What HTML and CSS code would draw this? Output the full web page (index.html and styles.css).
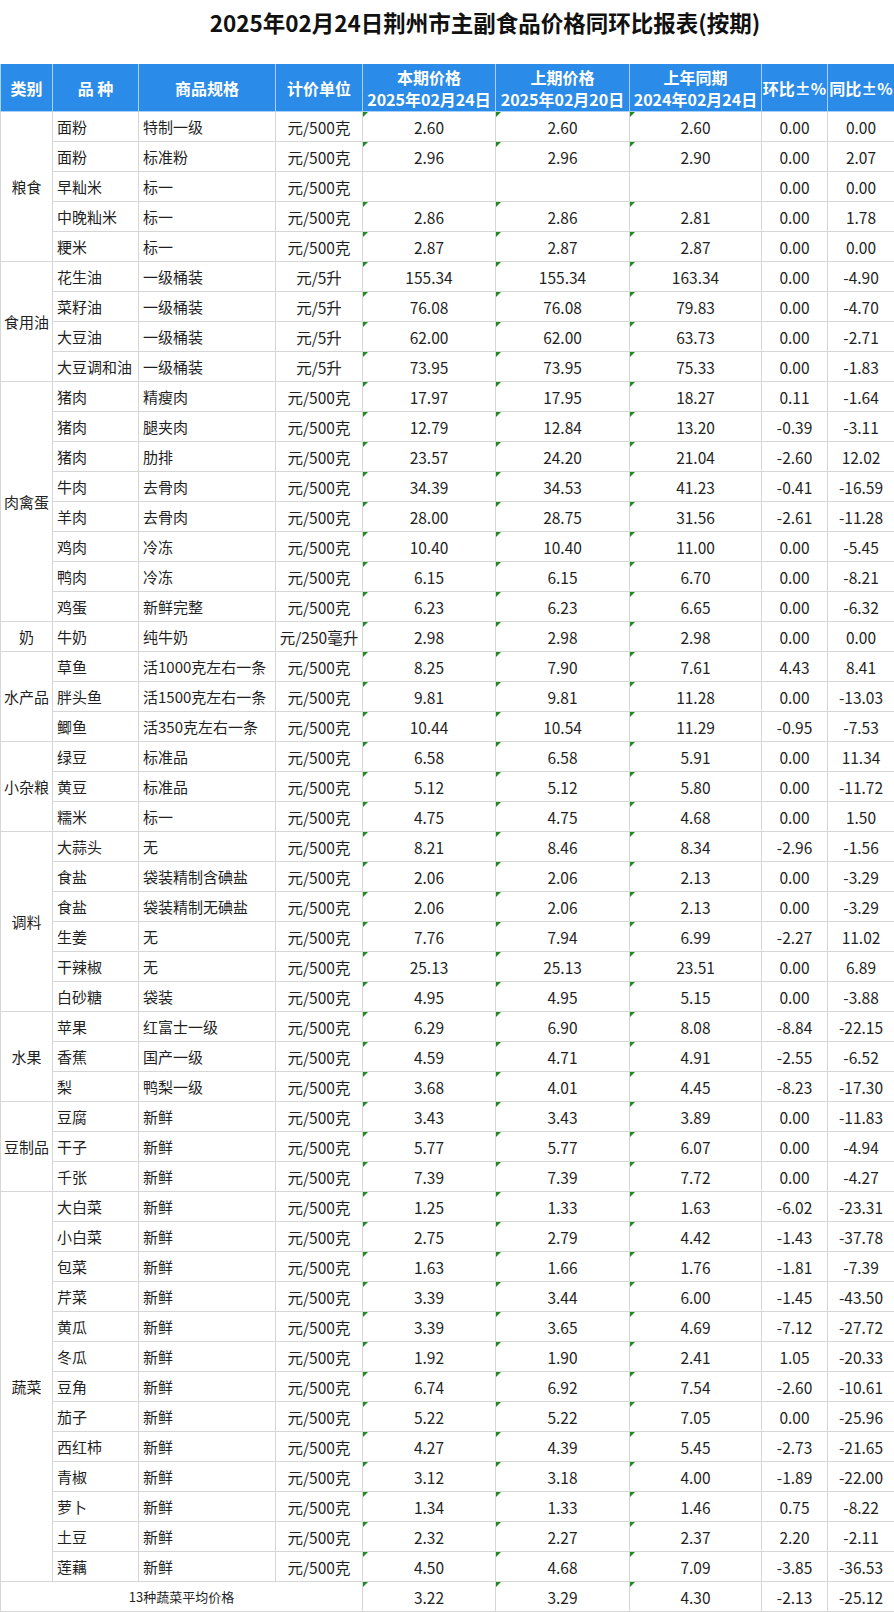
FILE: index.html
```html
<!DOCTYPE html>
<html lang="zh-CN">
<head>
<meta charset="utf-8">
<title>荆州市主副食品价格同环比报表</title>
<link rel="stylesheet" href="styles.css">
</head>
<body>
<h1 class="title">2025年02月24日荆州市主副食品价格同环比报表(按期)</h1>
<table class="report">
<colgroup>
<col class="c1"><col class="c2"><col class="c3"><col class="c4"><col class="c5"><col class="c6"><col class="c7"><col class="c8"><col class="c9">
</colgroup>
<thead>
<tr>
<th>类别</th><th>品 种</th><th>商品规格</th><th>计价单位</th>
<th>本期价格<br>2025年02月24日</th><th>上期价格<br>2025年02月20日</th><th>上年同期<br>2024年02月24日</th>
<th>环比±%</th><th>同比±%</th>
</tr>
</thead>
<tbody>
<tr><td class="cat" rowspan="5">粮食</td><td class="l">面粉</td><td class="l">特制一级</td><td>元/500克</td><td class="g">2.60</td><td class="g">2.60</td><td class="g">2.60</td><td>0.00</td><td>0.00</td></tr>
<tr><td class="l">面粉</td><td class="l">标准粉</td><td>元/500克</td><td class="g">2.96</td><td class="g">2.96</td><td class="g">2.90</td><td>0.00</td><td>2.07</td></tr>
<tr><td class="l">早籼米</td><td class="l">标一</td><td>元/500克</td><td></td><td></td><td></td><td>0.00</td><td>0.00</td></tr>
<tr><td class="l">中晚籼米</td><td class="l">标一</td><td>元/500克</td><td class="g">2.86</td><td class="g">2.86</td><td class="g">2.81</td><td>0.00</td><td>1.78</td></tr>
<tr><td class="l">粳米</td><td class="l">标一</td><td>元/500克</td><td class="g">2.87</td><td class="g">2.87</td><td class="g">2.87</td><td>0.00</td><td>0.00</td></tr>

<tr><td class="cat" rowspan="4">食用油</td><td class="l">花生油</td><td class="l">一级桶装</td><td>元/5升</td><td class="g">155.34</td><td class="g">155.34</td><td class="g">163.34</td><td>0.00</td><td>-4.90</td></tr>
<tr><td class="l">菜籽油</td><td class="l">一级桶装</td><td>元/5升</td><td class="g">76.08</td><td class="g">76.08</td><td class="g">79.83</td><td>0.00</td><td>-4.70</td></tr>
<tr><td class="l">大豆油</td><td class="l">一级桶装</td><td>元/5升</td><td class="g">62.00</td><td class="g">62.00</td><td class="g">63.73</td><td>0.00</td><td>-2.71</td></tr>
<tr><td class="l">大豆调和油</td><td class="l">一级桶装</td><td>元/5升</td><td class="g">73.95</td><td class="g">73.95</td><td class="g">75.33</td><td>0.00</td><td>-1.83</td></tr>

<tr><td class="cat" rowspan="8">肉禽蛋</td><td class="l">猪肉</td><td class="l">精瘦肉</td><td>元/500克</td><td class="g">17.97</td><td class="g">17.95</td><td class="g">18.27</td><td>0.11</td><td>-1.64</td></tr>
<tr><td class="l">猪肉</td><td class="l">腿夹肉</td><td>元/500克</td><td class="g">12.79</td><td class="g">12.84</td><td class="g">13.20</td><td>-0.39</td><td>-3.11</td></tr>
<tr><td class="l">猪肉</td><td class="l">肋排</td><td>元/500克</td><td class="g">23.57</td><td class="g">24.20</td><td class="g">21.04</td><td>-2.60</td><td>12.02</td></tr>
<tr><td class="l">牛肉</td><td class="l">去骨肉</td><td>元/500克</td><td class="g">34.39</td><td class="g">34.53</td><td class="g">41.23</td><td>-0.41</td><td>-16.59</td></tr>
<tr><td class="l">羊肉</td><td class="l">去骨肉</td><td>元/500克</td><td class="g">28.00</td><td class="g">28.75</td><td class="g">31.56</td><td>-2.61</td><td>-11.28</td></tr>
<tr><td class="l">鸡肉</td><td class="l">冷冻</td><td>元/500克</td><td class="g">10.40</td><td class="g">10.40</td><td class="g">11.00</td><td>0.00</td><td>-5.45</td></tr>
<tr><td class="l">鸭肉</td><td class="l">冷冻</td><td>元/500克</td><td class="g">6.15</td><td class="g">6.15</td><td class="g">6.70</td><td>0.00</td><td>-8.21</td></tr>
<tr><td class="l">鸡蛋</td><td class="l">新鲜完整</td><td>元/500克</td><td class="g">6.23</td><td class="g">6.23</td><td class="g">6.65</td><td>0.00</td><td>-6.32</td></tr>

<tr><td class="cat">奶</td><td class="l">牛奶</td><td class="l">纯牛奶</td><td>元/250毫升</td><td class="g">2.98</td><td class="g">2.98</td><td class="g">2.98</td><td>0.00</td><td>0.00</td></tr>

<tr><td class="cat" rowspan="3">水产品</td><td class="l">草鱼</td><td class="l">活1000克左右一条</td><td>元/500克</td><td class="g">8.25</td><td class="g">7.90</td><td class="g">7.61</td><td>4.43</td><td>8.41</td></tr>
<tr><td class="l">胖头鱼</td><td class="l">活1500克左右一条</td><td>元/500克</td><td class="g">9.81</td><td class="g">9.81</td><td class="g">11.28</td><td>0.00</td><td>-13.03</td></tr>
<tr><td class="l">鲫鱼</td><td class="l">活350克左右一条</td><td>元/500克</td><td class="g">10.44</td><td class="g">10.54</td><td class="g">11.29</td><td>-0.95</td><td>-7.53</td></tr>

<tr><td class="cat" rowspan="3">小杂粮</td><td class="l">绿豆</td><td class="l">标准品</td><td>元/500克</td><td class="g">6.58</td><td class="g">6.58</td><td class="g">5.91</td><td>0.00</td><td>11.34</td></tr>
<tr><td class="l">黄豆</td><td class="l">标准品</td><td>元/500克</td><td class="g">5.12</td><td class="g">5.12</td><td class="g">5.80</td><td>0.00</td><td>-11.72</td></tr>
<tr><td class="l">糯米</td><td class="l">标一</td><td>元/500克</td><td class="g">4.75</td><td class="g">4.75</td><td class="g">4.68</td><td>0.00</td><td>1.50</td></tr>

<tr><td class="cat" rowspan="6">调料</td><td class="l">大蒜头</td><td class="l">无</td><td>元/500克</td><td class="g">8.21</td><td class="g">8.46</td><td class="g">8.34</td><td>-2.96</td><td>-1.56</td></tr>
<tr><td class="l">食盐</td><td class="l">袋装精制含碘盐</td><td>元/500克</td><td class="g">2.06</td><td class="g">2.06</td><td class="g">2.13</td><td>0.00</td><td>-3.29</td></tr>
<tr><td class="l">食盐</td><td class="l">袋装精制无碘盐</td><td>元/500克</td><td class="g">2.06</td><td class="g">2.06</td><td class="g">2.13</td><td>0.00</td><td>-3.29</td></tr>
<tr><td class="l">生姜</td><td class="l">无</td><td>元/500克</td><td class="g">7.76</td><td class="g">7.94</td><td class="g">6.99</td><td>-2.27</td><td>11.02</td></tr>
<tr><td class="l">干辣椒</td><td class="l">无</td><td>元/500克</td><td class="g">25.13</td><td class="g">25.13</td><td class="g">23.51</td><td>0.00</td><td>6.89</td></tr>
<tr><td class="l">白砂糖</td><td class="l">袋装</td><td>元/500克</td><td class="g">4.95</td><td class="g">4.95</td><td class="g">5.15</td><td>0.00</td><td>-3.88</td></tr>

<tr><td class="cat" rowspan="3">水果</td><td class="l">苹果</td><td class="l">红富士一级</td><td>元/500克</td><td class="g">6.29</td><td class="g">6.90</td><td class="g">8.08</td><td>-8.84</td><td>-22.15</td></tr>
<tr><td class="l">香蕉</td><td class="l">国产一级</td><td>元/500克</td><td class="g">4.59</td><td class="g">4.71</td><td class="g">4.91</td><td>-2.55</td><td>-6.52</td></tr>
<tr><td class="l">梨</td><td class="l">鸭梨一级</td><td>元/500克</td><td class="g">3.68</td><td class="g">4.01</td><td class="g">4.45</td><td>-8.23</td><td>-17.30</td></tr>

<tr><td class="cat" rowspan="3">豆制品</td><td class="l">豆腐</td><td class="l">新鲜</td><td>元/500克</td><td class="g">3.43</td><td class="g">3.43</td><td class="g">3.89</td><td>0.00</td><td>-11.83</td></tr>
<tr><td class="l">干子</td><td class="l">新鲜</td><td>元/500克</td><td class="g">5.77</td><td class="g">5.77</td><td class="g">6.07</td><td>0.00</td><td>-4.94</td></tr>
<tr><td class="l">千张</td><td class="l">新鲜</td><td>元/500克</td><td class="g">7.39</td><td class="g">7.39</td><td class="g">7.72</td><td>0.00</td><td>-4.27</td></tr>

<tr><td class="cat" rowspan="13">蔬菜</td><td class="l">大白菜</td><td class="l">新鲜</td><td>元/500克</td><td class="g">1.25</td><td class="g">1.33</td><td class="g">1.63</td><td>-6.02</td><td>-23.31</td></tr>
<tr><td class="l">小白菜</td><td class="l">新鲜</td><td>元/500克</td><td class="g">2.75</td><td class="g">2.79</td><td class="g">4.42</td><td>-1.43</td><td>-37.78</td></tr>
<tr><td class="l">包菜</td><td class="l">新鲜</td><td>元/500克</td><td class="g">1.63</td><td class="g">1.66</td><td class="g">1.76</td><td>-1.81</td><td>-7.39</td></tr>
<tr><td class="l">芹菜</td><td class="l">新鲜</td><td>元/500克</td><td class="g">3.39</td><td class="g">3.44</td><td class="g">6.00</td><td>-1.45</td><td>-43.50</td></tr>
<tr><td class="l">黄瓜</td><td class="l">新鲜</td><td>元/500克</td><td class="g">3.39</td><td class="g">3.65</td><td class="g">4.69</td><td>-7.12</td><td>-27.72</td></tr>
<tr><td class="l">冬瓜</td><td class="l">新鲜</td><td>元/500克</td><td class="g">1.92</td><td class="g">1.90</td><td class="g">2.41</td><td>1.05</td><td>-20.33</td></tr>
<tr><td class="l">豆角</td><td class="l">新鲜</td><td>元/500克</td><td class="g">6.74</td><td class="g">6.92</td><td class="g">7.54</td><td>-2.60</td><td>-10.61</td></tr>
<tr><td class="l">茄子</td><td class="l">新鲜</td><td>元/500克</td><td class="g">5.22</td><td class="g">5.22</td><td class="g">7.05</td><td>0.00</td><td>-25.96</td></tr>
<tr><td class="l">西红柿</td><td class="l">新鲜</td><td>元/500克</td><td class="g">4.27</td><td class="g">4.39</td><td class="g">5.45</td><td>-2.73</td><td>-21.65</td></tr>
<tr><td class="l">青椒</td><td class="l">新鲜</td><td>元/500克</td><td class="g">3.12</td><td class="g">3.18</td><td class="g">4.00</td><td>-1.89</td><td>-22.00</td></tr>
<tr><td class="l">萝卜</td><td class="l">新鲜</td><td>元/500克</td><td class="g">1.34</td><td class="g">1.33</td><td class="g">1.46</td><td>0.75</td><td>-8.22</td></tr>
<tr><td class="l">土豆</td><td class="l">新鲜</td><td>元/500克</td><td class="g">2.32</td><td class="g">2.27</td><td class="g">2.37</td><td>2.20</td><td>-2.11</td></tr>
<tr><td class="l">莲藕</td><td class="l">新鲜</td><td>元/500克</td><td class="g">4.50</td><td class="g">4.68</td><td class="g">7.09</td><td>-3.85</td><td>-36.53</td></tr>

<tr><td class="sum" colspan="4">13种蔬菜平均价格</td><td class="g">3.22</td><td class="g">3.29</td><td class="g">4.30</td><td>-2.13</td><td>-25.12</td></tr>
</tbody>
</table>
</body>
</html>
```

FILE: styles.css
```css
html, body {
  margin: 0;
  padding: 0;
  background: #ffffff;
}

body {
  font-family: "Noto Sans CJK SC", "Noto Sans", sans-serif;
  color: #1f1f1f;
  width: 894px;
  overflow: hidden;
}

.title {
  margin: 0;
  height: 64px;
  line-height: 44px;
  font-size: 22.5px;
  font-weight: bold;
  color: #111;
  text-align: center;
  padding-left: 76px;
  box-sizing: border-box;
  white-space: nowrap;
}

.report {
  border-collapse: collapse;
  table-layout: fixed;
  width: 894px;
}

.c1 { width: 52px; }
.c2 { width: 86px; }
.c3 { width: 137px; }
.c4 { width: 87px; }
.c5 { width: 133px; }
.c6 { width: 134px; }
.c7 { width: 132px; }
.c8 { width: 66px; }
.c9 { width: 67px; }

.report th {
  background: #2b8be8;
  color: #ffffff;
  font-weight: bold;
  font-size: 16px;
  line-height: 22px;
  height: 47px;
  padding: 0;
  border: 1px solid #a9d0f6;
  border-top: none;
  text-align: center;
  white-space: nowrap;
  overflow: hidden;
}

.report td {
  height: 29px;
  padding: 0;
  font-size: 15.5px;
  line-height: 20px;
  text-align: center;
  border: 1px solid #d6d6d6;
  white-space: nowrap;
  overflow: visible;
  position: relative;
}

.report td.l,
.report td.cat {
  font-size: 15px;
}

.report td.l {
  text-align: left;
  padding-left: 4px;
}

.report td.cat {
  text-align: center;
}

.report td.sum {
  font-size: 13px;
}

.report td.g::before {
  content: "";
  position: absolute;
  left: 0;
  top: 0;
  width: 0;
  height: 0;
  border-top: 5px solid #1f8a1f;
  border-right: 5px solid transparent;
}
```
